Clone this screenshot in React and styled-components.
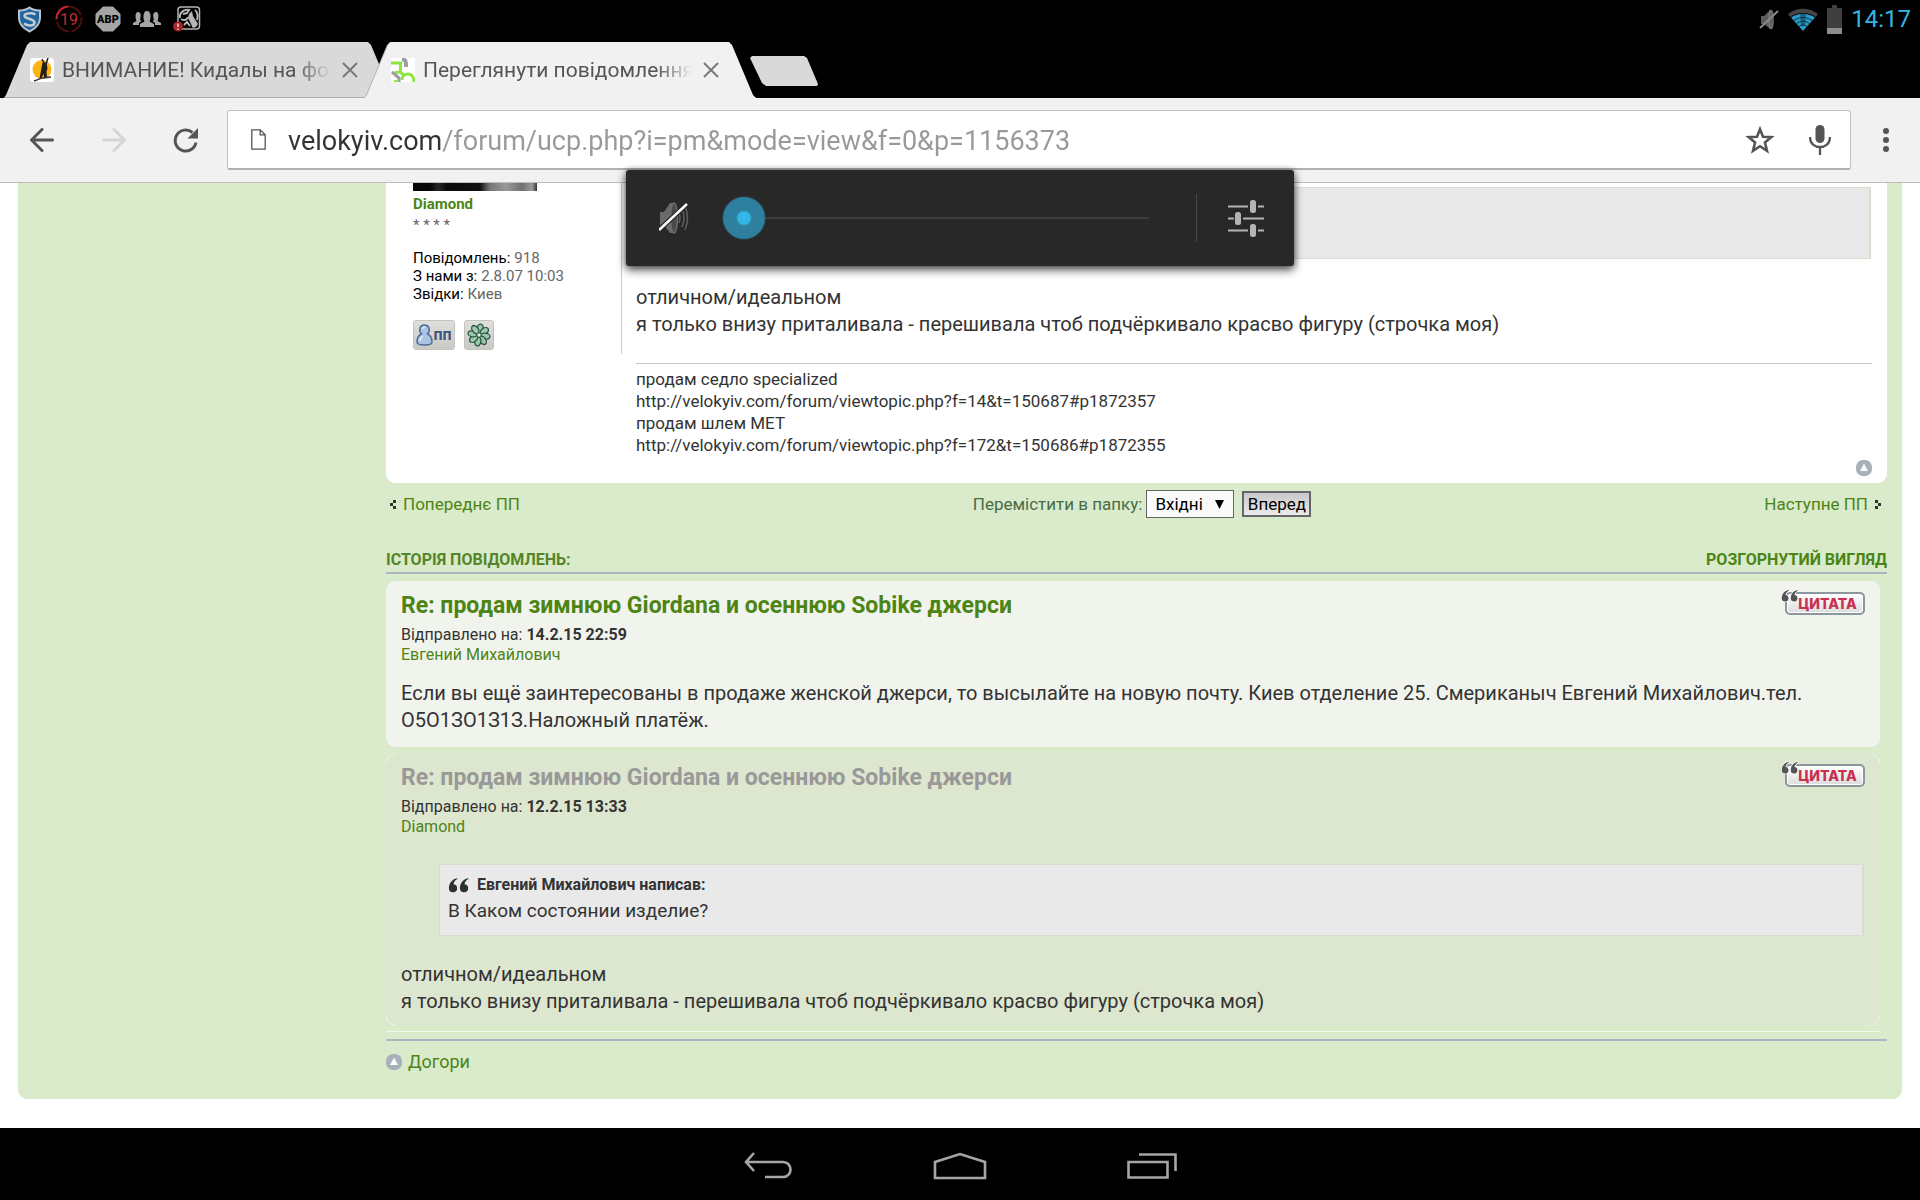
import React, { useState } from "react";
import styled, { createGlobalStyle } from "styled-components";

const GlobalStyle = createGlobalStyle`
  *, *::before, *::after { box-sizing: border-box; }
  body { margin: 0; background: #fff; font-family: Roboto, "Noto Sans", sans-serif; color: #333; }
  button, input, select { font-family: inherit; margin: 0; }
  p, h2, h3, dl, dt, dd, blockquote { margin: 0; }
  a { color: #4c8515; text-decoration: none; }
`;

const Screen = styled.div`
  position: relative;
  display: flex;
  flex-direction: column;
  min-height: 100vh;
`;

/* ---------- system status bar ---------- */

const StatusBar = styled.header`
  display: flex;
  align-items: center;
  justify-content: space-between;
  height: 38px;
  padding: 0 9px 0 16px;
  background: #000;
`;

const StatusGroup = styled.div`
  display: flex;
  align-items: center;
  gap: ${(p) => p.$gap}px;
`;

const Clock = styled.time`
  color: #33b5e5;
  font-size: 24px;
  line-height: 38px;
`;

/* ---------- browser tabs ---------- */

const TabStrip = styled.nav`
  display: flex;
  align-items: flex-end;
  height: 60px;
  padding-left: 4px;
  background: #000;
`;

const TabEdge = styled.div`
  width: 391px;
  margin-right: -30px;
  filter: ${(p) => (p.$active ? "drop-shadow(-1px 0 0 #b4b4b4)" : "none")};
`;

const TabShape = styled.div`
  display: flex;
  align-items: center;
  height: 56px;
  padding: 0 26px;
  background: ${(p) => (p.$active ? "#f1f1f1" : "#d9d9d9")};
  border-bottom: 1px solid ${(p) => (p.$active ? "#f1f1f1" : "#adadad")};
  clip-path: polygon(0 100%, 2px calc(100% - 3px), 23px 3px, 26px 0, calc(100% - 27px) 0, calc(100% - 24px) 3px, calc(100% - 3px) calc(100% - 3px), 100% 100%);
`;

const TabTitle = styled.button`
  flex: 1;
  min-width: 0;
  margin-left: 8px;
  padding: 0;
  border: 0;
  background: none;
  color: #555;
  font-size: 21px;
  line-height: 30px;
  text-align: left;
  white-space: nowrap;
  overflow: hidden;
  mask-image: linear-gradient(90deg, #000 calc(100% - 36px), transparent);
`;

const IconButton = styled.button`
  display: flex;
  align-items: center;
  justify-content: center;
  flex: none;
  width: ${(p) => p.$width}px;
  height: 100%;
  padding: 0;
  border: 0;
  background: none;
`;

const NewTab = styled.button`
  align-self: center;
  width: 68px;
  height: 30px;
  margin: 6px 0 0 24px;
  padding: 0;
  border: 0;
  background: #d9d9d9;
  clip-path: polygon(0 2px, 2px 0, 54px 0, 57px 2px, 100% 28px, 67px 100%, 16px 100%, 12px 27px);
`;

/* ---------- toolbar ---------- */

const Toolbar = styled.form`
  display: flex;
  align-items: center;
  height: 85px;
  padding-left: 6px;
  background: #f1f1f1;
  border-bottom: 1px solid #bdbdbd;
`;

const Omnibox = styled.div`
  display: flex;
  align-items: center;
  flex: 1;
  height: 60px;
  margin-left: 5px;
  padding-left: 23px;
  background: #fff;
  border: 1px solid #c0c0c0;
  border-bottom: 2px solid #b0b0b0;
  border-radius: 3px;
`;

const Address = styled.input`
  flex: 1;
  min-width: 0;
  height: 50px;
  margin-left: 22px;
  padding: 2px 0 0;
  border: 0;
  outline: 0;
  font-size: 27px;
  color: #999;
  background: linear-gradient(90deg, #333 155px, #999 155px);
  background-clip: text;
  -webkit-background-clip: text;
  -webkit-text-fill-color: transparent;
`;

/* ---------- volume panel ---------- */

const VolumePanel = styled.section`
  position: absolute;
  top: 170px;
  left: 0;
  right: 0;
  display: flex;
  align-items: center;
  width: 668px;
  height: 96px;
  margin: 0 auto;
  padding-left: 33px;
  background: #282828;
  border-radius: 3px;
  box-shadow: 0 4px 10px rgba(0, 0, 0, 0.65), 0 0 6px rgba(0, 0, 0, 0.35);
`;

const VolumeRange = styled.input`
  flex: 1;
  height: 44px;
  margin: 0 26px 0 33px;
  appearance: none;
  background: linear-gradient(#3c3c3c, #3c3c3c) 21px 50% / calc(100% - 42px) 2px no-repeat;
  &::-webkit-slider-thumb {
    appearance: none;
    width: 44px;
    height: 44px;
    border-radius: 50%;
    background: radial-gradient(circle, #33b5e5 6px, #2f7f9e 8px 20px, #28607a 21px, transparent 22px);
  }
`;

const PanelRule = styled.span`
  width: 1px;
  height: 48px;
  background: #484848;
`;

/* ---------- forum page ---------- */

const Page = styled.main`
  flex: 1;
  padding: 0 18px 29px;
  background: #fff;
`;

const Forum = styled.div`
  padding: 0 15px 26px 368px;
  background: #d9ebca;
  border-radius: 0 0 9px 9px;
`;

const Post = styled.article`
  display: flex;
  align-items: flex-start;
  padding: 0 15px 7px 27px;
  background: #fff;
  border-radius: 0 0 9px 9px;
`;

const Profile = styled.aside`
  flex: none;
  width: 209px;
  padding-bottom: 4px;
  border-right: 1px solid #ccc;
  font-size: 15px;
  line-height: 18px;
  color: #666;
`;

const Avatar = styled.div`
  width: 124px;
  height: 8px;
  margin-bottom: 4px;
  background: linear-gradient(90deg, #060606 0 14%, #262626 20%, #0a0a0a 28%, #101010 54%, #777 62%, #999 75%, #707070 88%, #999 96%, #333);
`;

const AuthorLink = styled.a`
  display: block;
  font-weight: ${(p) => (p.$bold ? 700 : 400)};
`;

const Rank = styled.div`
  line-height: 24px;
`;

const Stats = styled.dl`
  margin: 12px 0 17px;
`;

const Stat = styled.div`
  display: flex;
  gap: 4px;
  dt { color: #000; }
`;

const ContactRow = styled.div`
  display: flex;
  gap: 9px;
`;

const ContactButton = styled.button`
  display: flex;
  align-items: center;
  justify-content: center;
  width: ${(p) => p.$width}px;
  height: 30px;
  padding: 0;
  border: 1px solid #c3c3c0;
  border-radius: 3px;
  background: linear-gradient(#dededb, #c9c9c6);
  color: #3d5878;
  font-size: 16px;
  font-weight: 700;
  line-height: 18px;
`;

const PostBody = styled.div`
  flex: 1;
  display: flex;
  flex-direction: column;
  margin-left: 14px;
`;

const Text = styled.p`
  font-size: 20px;
  line-height: 27px;
`;

const QuoteBox = styled.blockquote`
  min-height: 72px;
  margin: ${(p) => p.$top}px 1px 25px 38px;
  padding: 9px 8px 10px;
  background: #e9e9e9;
  border: 1px solid #dbdbce;
  border-width: 1px 2px 1px 1px;
`;

const QuoteAuthor = styled.cite`
  display: flex;
  align-items: center;
  gap: 7px;
  font-size: 16px;
  font-style: normal;
  font-weight: 700;
  line-height: 22px;
`;

const QuoteText = styled.p`
  padding-top: 2px;
  font-size: 19px;
  line-height: 26px;
`;

const Signature = styled.div`
  margin: 25px 0 4px;
  padding-top: 4px;
  border-top: 1px solid #c6c6c6;
  font-size: 17px;
  line-height: 22px;
`;

const TopLink = styled.a`
  display: flex;
  align-items: center;
  align-self: ${(p) => p.$align || "auto"};
  gap: 6px;
  font-size: 18px;
  line-height: ${(p) => (p.$align ? 16 : 22)}px;
`;

const Pager = styled.form`
  display: flex;
  align-items: center;
  justify-content: space-between;
  padding: 7px 6px 0 4px;
  font-size: 17px;
  line-height: 28px;
`;

const PagerLink = styled.a`
  display: flex;
  align-items: center;
  gap: 7px;
`;

const MoveGroup = styled.div`
  display: flex;
  align-items: center;
  label { color: #476c47; }
`;

const SelectWrap = styled.span`
  display: grid;
  align-items: center;
  width: 88px;
  height: 28px;
  margin: 0 8px 0 4px;
  & > * { grid-area: 1 / 1; }
  svg { justify-self: end; margin-right: 10px; pointer-events: none; }
`;

const FolderSelect = styled.select`
  width: 100%;
  height: 28px;
  padding: 0 8px;
  appearance: none;
  border: 1px solid #666;
  border-radius: 0;
  background: #fafafa;
  color: #000;
  font-size: 17px;
`;

const GoButton = styled.button`
  width: 69px;
  height: 26px;
  padding: 0;
  border: 2px solid #666;
  background: linear-gradient(#c8c8c8, #ebebeb);
  color: #000;
  font-size: 17px;
  line-height: 20px;
`;

const SectionHead = styled.div`
  display: flex;
  justify-content: space-between;
  margin: 32px 0 7px;
  padding-bottom: 2px;
  border-bottom: 2px solid #a9b8bf;
  font-size: 16px;
  font-weight: 700;
  line-height: 20px;
  h2 { font: inherit; color: #568529; }
`;

const Card = styled.article`
  margin: 0 7px ${(p) => (p.$read ? 6 : 7)}px 0;
  padding: ${(p) => (p.$read ? "10px 15px" : "11px 15px 13px")};
  border-radius: 9px;
  ${(p) =>
    p.$read
      ? `background:
          radial-gradient(circle at 9px 9px, transparent 8px, #f3f7ee 8px) 0 0 / 9px 9px no-repeat,
          radial-gradient(circle at 0 9px, transparent 8px, #f3f7ee 8px) 100% 0 / 9px 9px no-repeat,
          radial-gradient(circle at 9px 0, transparent 8px, #f3f7ee 8px) 0 100% / 9px 9px no-repeat,
          radial-gradient(circle at 0 0, transparent 8px, #f3f7ee 8px) 100% 100% / 9px 9px no-repeat,
          #dde6cf;`
      : "background: #f1f4ed;"}
`;

const CardHead = styled.header`
  display: flex;
  align-items: flex-start;
  justify-content: space-between;
  margin-bottom: 5px;
`;

const CardTitle = styled.h3`
  font-size: 23px;
  line-height: 28px;
  color: ${(p) => (p.$read ? "#999" : "#4c8515")};
`;

const Meta = styled.div`
  margin-bottom: ${(p) => p.$gap}px;
  font-size: 16px;
  line-height: 20px;
`;

const CiteButton = styled.button`
  position: relative;
  width: 80px;
  height: 23px;
  padding: 0 5px 0 10px;
  border: 2px solid #8b979c;
  border-radius: 5px;
  background: linear-gradient(#fff, #dcdcdc);
  box-shadow: inset 0 0 0 1px #fff;
  color: #c9304f;
  font-family: Inter, Roboto, sans-serif;
  font-size: 14px;
  font-weight: 800;
  line-height: 18px;
  svg { position: absolute; left: -6px; top: -5px; }
`;

const EndRule = styled.div`
  height: 1px;
  margin: 0 7px 7px 0;
  background: #f3f7ee;
`;

const ForumFoot = styled.footer`
  padding-top: 10px;
  border-top: 2px solid #a9b8bf;
`;

/* ---------- system navigation bar ---------- */

const NavBar = styled.nav`
  display: flex;
  justify-content: center;
  height: 72px;
  padding-top: 3px;
  background: #000;
`;

/* ---------- drawings ---------- */

const Shield = () => (
  <svg width="27" height="28" viewBox="0 0 27 28">
    <path d="M13.500 2.500C10 5 6 5.500 3 5.500V13c0 7 4.500 10.500 10.500 13.500C19.500 23.500 24 20 24 13V5.500c-4 0-7.500-.5-10.500-3z" fill="#20659f" stroke="#b9c3ca" strokeWidth="2" />
    <path d="M19.500 9.500c-3-1.500-11-2-11 1.500 0 3 10 2.500 10 6.500 0 3.500-6 4-10.500 1" fill="none" stroke="#c6ced3" strokeWidth="2.500" />
  </svg>
);

const Ring = () => (
  <svg width="28" height="28" viewBox="0 0 28 28">
    <circle cx="14" cy="14" r="12.500" fill="none" stroke="#4a0f10" strokeWidth="2" strokeDasharray="17 2" />
    <path d="M1.500 14A12.500 12.500 0 0 1 13 1.500" fill="none" stroke="#c02528" strokeWidth="2" />
    <text x="14" y="19.500" textAnchor="middle" fontFamily="Roboto" fontSize="16" fill="#c42a2c">19</text>
  </svg>
);

const AdBlock = () => (
  <svg width="26" height="26" viewBox="0 0 26 26">
    <path d="M8 .5h10L25.500 8v10L18 25.500H8L.5 18V8z" fill="#a5a5a5" />
    <text x="13" y="17" textAnchor="middle" fontFamily="Roboto" fontWeight="900" fontSize="11" fill="#000">ABP</text>
  </svg>
);

const People = () => (
  <svg width="28" height="18" viewBox="0 0 28 18" fill="#a5a5a5">
    <path d="M0 15v-2l3.500-2c-1-2-2-9 1.500-9s3 4 2 8l1.500 1-2.500 2v2zM28 15v-2l-3.500-2c1-2 2-9-1.500-9s-3 4-2 8l-1.500 1 2.500 2v2z" />
    <path d="M7 17v-3l4.500-2.500C10 9 9.500 1 14 1s4 8 2.500 10.500L21 14v3z" />
  </svg>
);

const AppAlert = () => (
  <svg width="28" height="26" viewBox="0 0 28 26">
    <rect x="5" y="1" width="21.500" height="22" rx="3" fill="#000" stroke="#b5b5b5" strokeWidth="1.500" />
    <path d="M16 8l3-3 1 5 5 8-2 3-4-1-4-8z" fill="#b5b5b5" />
    <path d="M7 12c-1-6 5-9 9-8l-2 3-4 1M8 13c3 2 6 1 7-2M22 4c3 2 3 7 2 10M11 19l3-3 3 4M19 20l3 1" fill="none" stroke="#b5b5b5" strokeWidth="2" />
    <circle cx="5" cy="20.500" r="5" fill="#a82629" />
    <path d="M5 17.500V21M5 22.500V24" stroke="#e5b5b5" strokeWidth="1.800" />
  </svg>
);

const SmallMute = () => (
  <svg width="20" height="22" viewBox="0 0 20 22">
    <path d="M2 8h3l6-6h2v19h-2l-6-5H2z" fill="#5c5c5c" />
    <ellipse cx="12" cy="11.500" rx="2" ry="9" fill="none" stroke="#777" strokeWidth="1.500" />
    <path d="M1 20L19 3" stroke="#8a8a8a" strokeWidth="2" />
  </svg>
);

const Wifi = () => (
  <svg width="30" height="23" viewBox="0 0 30 23">
    <path d="M0 6C9-1 21-1 30 6l-2 3C20 3.500 10 3.500 2 9z" fill="#444" />
    <path d="M3 9.500c8-5 16-5 24 0L15 23z" fill="#2b9bc9" />
    <path d="M6 12.500c6-4 12-4 18 0M8.500 15.500c4-3 9-3 13 0M11 18.500c3-2 5-2 8 0" fill="none" stroke="#0b2e3c" strokeWidth="1" />
    <path d="M12 6h6l-1 12h-4z" fill="#0c3442" opacity=".55" />
  </svg>
);

const Battery = () => (
  <svg width="15" height="29" viewBox="0 0 15 29">
    <path d="M5 0h5v3h5v26H0V3h5z" fill="#3f3f3f" />
    <path d="M0 23h15v6H0z" fill="#8c8c8c" />
  </svg>
);

const SunFavicon = () => (
  <svg width="24" height="24" viewBox="0 0 24 24">
    <rect width="24" height="24" rx="3" fill="#fff" />
    <circle cx="12" cy="11.500" r="9.500" fill="#fbb416" />
    <path d="M12 1l2 4M18 0l-2 6" stroke="#222" strokeWidth="1.500" />
    <path d="M12.500 4.500h4l1 6-1 3 .5 6h-3l-.5-4-2 5h-2l1.500-8z" fill="#262014" />
    <path d="M4 23c4-1 6-3 9-3l8-1" fill="none" stroke="#333" strokeWidth="1.500" />
  </svg>
);

const BikeFavicon = () => (
  <svg width="24" height="24" viewBox="0 0 24 24">
    <rect width="24" height="24" fill="#fff" />
    <path d="M11 1.500h2q2 1 2 4V9" fill="none" stroke="#9e9e9e" strokeWidth="4" />
    <path d="M0 5h9.500v9l-5.500.5M9 14l5 4" fill="none" stroke="#8ee53f" strokeWidth="3" />
    <path d="M11 22c0-4 3-6 6-6 4 0 6 4 6 8" fill="none" stroke="#8ee53f" strokeWidth="3" />
    <path d="M1 14l7 6v4" fill="none" stroke="#9e9e9e" strokeWidth="3" />
    <path d="M3 22h3v2H3z" fill="#8ee53f" />
  </svg>
);

const Cross = () => (
  <svg width="16" height="16" viewBox="0 0 16 16">
    <path d="M1 1l14 14M15 1L1 15" stroke="#7a7a7a" strokeWidth="2" />
  </svg>
);

const Arrow = ({ flip }) => (
  <svg width="24" height="24" viewBox="0 0 24 24" fill="none" stroke={flip ? "#d6d6d6" : "#555"} strokeWidth="3" strokeLinecap="round">
    <path d={flip ? "M1.500 12h20M12 1.500L22.500 12 12 22.500" : "M22.500 12h-20M12 1.500L1.500 12 12 22.500"} />
  </svg>
);

const Reload = () => (
  <svg width="26" height="26" viewBox="0 0 26 26">
    <path d="M19.500 5.500A10.500 10.500 0 1 0 23 15.500" fill="none" stroke="#555" strokeWidth="3" />
    <path d="M25 1v10.500H14.500z" fill="#555" />
  </svg>
);

const PageIcon = () => (
  <svg width="15" height="21" viewBox="0 0 15 21">
    <path d="M.8.8h8.400l5 5v14.400H.8zM9.200.8v5h5" fill="none" stroke="#555" strokeWidth="1.300" />
  </svg>
);

const Star = () => (
  <svg width="30" height="28" viewBox="0 0 30 28">
    <path d="M15 3.200l3 7.500 8.300.5-6.400 5.200 2.100 8.400-7-4.600-7 4.600 2.100-8.400-6.400-5.200 8.300-.5z" fill="none" stroke="#555" strokeWidth="2.600" />
  </svg>
);

const Mic = () => (
  <svg width="22" height="30" viewBox="0 0 22 30">
    <rect x="6.500" y="0" width="9" height="18" rx="4.500" fill="#555" />
    <path d="M1.200 12v1.500a9.800 8.500 0 0 0 19.600 0V12M11 22v8" fill="none" stroke="#555" strokeWidth="2.300" />
  </svg>
);

const Dots = () => (
  <svg width="6" height="24" viewBox="0 0 6 24" fill="#555">
    <circle cx="3" cy="3" r="3" /><circle cx="3" cy="12" r="3" /><circle cx="3" cy="21" r="3" />
  </svg>
);

const PanelMute = () => (
  <svg width="30" height="34" viewBox="0 0 30 34">
    <path d="M1 11h4l6-9h4v30h-4l-6-8H1z" fill="#6b6b6b" />
    <ellipse cx="15" cy="17" rx="3.500" ry="15" fill="#4a4a4a" stroke="#6b6b6b" strokeWidth="1.500" />
    <path d="M20 12q2 5 0 10M23 8q4 9 0 18M26 5q5 12 0 24" fill="none" stroke="#606060" strokeWidth="1.500" />
    <path d="M0 29L28 3" stroke="#282828" strokeWidth="5" />
    <path d="M0 29L28 3" stroke="#fff" strokeWidth="2.500" />
  </svg>
);

const Sliders = () => (
  <svg width="36" height="38" viewBox="0 -1 36 38">
    <path d="M0 6.500h20M30 6.500h6M0 18.500h6M15 18.500h21M0 30.500h20M30 30.500h6" stroke="#b4b4b4" strokeWidth="2" />
    <rect x="22" y="0" width="6" height="13" rx="2.500" fill="#b4b4b4" />
    <rect x="7" y="12" width="6" height="13" rx="2.500" fill="#b4b4b4" />
    <rect x="22" y="24" width="6" height="13" rx="2.500" fill="#b4b4b4" />
  </svg>
);

const Person = () => (
  <svg width="17" height="22" viewBox="0 0 17 22">
    <path d="M1 18c0-4 2-7 4.500-8C2 6 4 1 8.500 1s6.500 5 3 9c2.500 1 4.500 4 4.500 8 0 4-15 4-15 0z" fill="#aac4e6" stroke="#4d6f96" strokeWidth="1.500" />
    <path d="M6 5q1-2 3-2M4 17q0-3 3-5" fill="none" stroke="#e6f0fb" strokeWidth="1.500" />
  </svg>
);

const Flower = () => (
  <svg width="24" height="24" viewBox="-12 -12 24 24">
    {[10, 55, 100, 145, 190, 235, 280, 325].map((a) => (
      <ellipse key={a} cx="0" cy="-6.500" rx="3" ry="4.600" transform={`rotate(${a})`} fill="#9cc9ae" stroke="#2c5444" strokeWidth="1.300" />
    ))}
    <circle r="2.200" fill="#d8efe0" stroke="#2c5444" />
  </svg>
);

const UpBadge = () => (
  <svg width="16" height="16" viewBox="0 0 16 16">
    <rect width="16" height="16" rx="7" fill="#a7b1b8" />
    <path d="M8 3.500l4 7.500H4z" fill="#fff" />
  </svg>
);

const PixelArrow = ({ flip }) => (
  <svg width="6" height="9" viewBox="0 0 6 9" fill="#333">
    <path d={flip ? "M0 0h3v3H0zM3 3h3v3H3zM0 6h3v3H0z" : "M3 0h3v3H3zM0 3h3v3H0zM3 6h3v3H3z"} />
  </svg>
);

const QuoteMarks = ({ width, height, outline }) => (
  <svg width={width} height={height} viewBox="-1 -1 24 18" fill={outline ? "#555" : "#2f2f2f"} stroke={outline ? "#fff" : "none"} strokeWidth="2" paintOrder="stroke">
    <path d="M9 0C3 1 0 6 0 11a4.500 4.500 0 1 0 5-4.500C5.500 4 7 2 9.500 1z" />
    <path d="M21 0c-6 1-9 6-9 11a4.500 4.500 0 1 0 5-4.500c.5-2.500 2-4.500 4.500-5.500z" />
  </svg>
);

const Triangle = () => (
  <svg width="9" height="9" viewBox="0 0 9 9"><path d="M0 0h9L4.500 9z" fill="#000" /></svg>
);

const NavIcon = ({ d, width }) => (
  <svg width={width} height="28" viewBox={`0 0 ${width} 28`}>
    <path d={d} fill="none" stroke="#a6a6a6" strokeWidth="2.600" />
  </svg>
);

/* ---------- page parts ---------- */

function Tab({ active, icon, title }) {
  return (
    <TabEdge $active={active}>
      <TabShape $active={active}>
        {icon}
        <TabTitle type="button">{title}</TabTitle>
        <IconButton type="button" $width={38} aria-label="Close tab"><Cross /></IconButton>
      </TabShape>
    </TabEdge>
  );
}

function HistoryCard({ read, date, author, children }) {
  return (
    <Card $read={read}>
      <CardHead>
        <CardTitle $read={read}>Re: продам зимнюю Giordana и осеннюю Sobike джерси</CardTitle>
        <CiteButton type="button"><QuoteMarks width={18} height={14} outline />ЦИТАТА</CiteButton>
      </CardHead>
      <Meta $gap={read ? 27 : 15}>
        <div>Відправлено на: <strong>{date}</strong></div>
        <AuthorLink href="#author">{author}</AuthorLink>
      </Meta>
      {children}
    </Card>
  );
}

export default function App() {
  const [volume, setVolume] = useState(0);
  const [url, setUrl] = useState("velokyiv.com/forum/ucp.php?i=pm&mode=view&f=0&p=1156373");
  return (
    <Screen>
      <GlobalStyle />
      <StatusBar>
        <StatusGroup $gap={12}><Shield /><Ring /><AdBlock /><People /><AppAlert /></StatusGroup>
        <StatusGroup $gap={9}><SmallMute /><Wifi /><Battery /><Clock>14:17</Clock></StatusGroup>
      </StatusBar>
      <TabStrip>
        <Tab icon={<SunFavicon />} title="ВНИМАНИЕ! Кидалы на фо" />
        <Tab active icon={<BikeFavicon />} title="Переглянути повідомлення" />
        <NewTab type="button" aria-label="New tab" />
      </TabStrip>
      <Toolbar onSubmit={(e) => e.preventDefault()}>
        <IconButton type="button" $width={72} aria-label="Back"><Arrow /></IconButton>
        <IconButton type="button" $width={72} aria-label="Forward"><Arrow flip /></IconButton>
        <IconButton type="button" $width={72} aria-label="Reload"><Reload /></IconButton>
        <Omnibox>
          <PageIcon />
          <Address aria-label="Address" value={url} onChange={(e) => setUrl(e.target.value)} />
          <IconButton type="button" $width={60} aria-label="Bookmark"><Star /></IconButton>
          <IconButton type="button" $width={60} aria-label="Voice search"><Mic /></IconButton>
        </Omnibox>
        <IconButton type="button" $width={69} aria-label="Menu"><Dots /></IconButton>
      </Toolbar>

      <Page>
        <Forum>
          <Post>
            <Profile>
              <Avatar />
              <AuthorLink $bold href="#diamond">Diamond</AuthorLink>
              <Rank>* * * *</Rank>
              <Stats>
                <Stat><dt>Повідомлень:</dt><dd>918</dd></Stat>
                <Stat><dt>З нами з:</dt><dd>2.8.07 10:03</dd></Stat>
                <Stat><dt>Звідки:</dt><dd>Киев</dd></Stat>
              </Stats>
              <ContactRow>
                <ContactButton type="button" $width={42}><Person />пп</ContactButton>
                <ContactButton type="button" $width={30} aria-label="ICQ"><Flower /></ContactButton>
              </ContactRow>
            </Profile>
            <PostBody>
              <QuoteBox $top={4} />
              <Text>отличном/идеальном<br />я только внизу приталивала - перешивала чтоб подчёркивало красво фигуру (строчка моя)</Text>
              <Signature>
                продам седло specialized<br />
                http://velokyiv.com/forum/viewtopic.php?f=14&amp;t=150687#p1872357<br />
                продам шлем MET<br />
                http://velokyiv.com/forum/viewtopic.php?f=172&amp;t=150686#p1872355
              </Signature>
              <TopLink $align="flex-end" href="#top" aria-label="Догори"><UpBadge /></TopLink>
            </PostBody>
          </Post>

          <Pager onSubmit={(e) => e.preventDefault()}>
            <PagerLink href="#prev"><PixelArrow />Попереднє ПП</PagerLink>
            <MoveGroup>
              <label htmlFor="folder">Перемістити в папку:</label>
              <SelectWrap>
                <FolderSelect id="folder"><option>Вхідні</option></FolderSelect>
                <Triangle />
              </SelectWrap>
              <GoButton type="submit">Вперед</GoButton>
            </MoveGroup>
            <PagerLink href="#next">Наступне ПП<PixelArrow flip /></PagerLink>
          </Pager>

          <SectionHead>
            <h2>ІСТОРІЯ ПОВІДОМЛЕНЬ:</h2>
            <a href="#expand">РОЗГОРНУТИЙ ВИГЛЯД</a>
          </SectionHead>

          <HistoryCard date="14.2.15 22:59" author="Евгений Михайлович">
            <Text>Если вы ещё заинтересованы в продаже женской джерси, то высылайте на новую почту. Киев отделение 25. Смериканыч Евгений Михайлович.тел. О5О1ЗО1З1З.Наложный платёж.</Text>
          </HistoryCard>
          <HistoryCard read date="12.2.15 13:33" author="Diamond">
            <QuoteBox $top={0}>
              <QuoteAuthor><QuoteMarks width={22} height={17} />Евгений Михайлович написав:</QuoteAuthor>
              <QuoteText>В Каком состоянии изделие?</QuoteText>
            </QuoteBox>
            <Text>отличном/идеальном<br />я только внизу приталивала - перешивала чтоб подчёркивало красво фигуру (строчка моя)</Text>
          </HistoryCard>
          <EndRule />
          <ForumFoot>
            <TopLink href="#top"><UpBadge />Догори</TopLink>
          </ForumFoot>
        </Forum>
      </Page>

      <NavBar>
        <IconButton $width={192} aria-label="Back"><NavIcon width={48} d="M10 1L2 10l8 9M2 10h37c10 0 10 15 0 15H21" /></IconButton>
        <IconButton $width={192} aria-label="Home"><NavIcon width={54} d="M2 26V10L27 2l25 8v16z" /></IconButton>
        <IconButton $width={192} aria-label="Recent apps"><NavIcon width={50} d="M1.500 10h39v15.500h-39zM12 2.500h36.500V19" /></IconButton>
      </NavBar>

      <VolumePanel aria-label="Volume">
        <PanelMute />
        <VolumeRange type="range" aria-label="Volume level" min="0" max="15" value={volume} onChange={(e) => setVolume(Number(e.target.value))} />
        <PanelRule />
        <IconButton $width={97} aria-label="Sound settings"><Sliders /></IconButton>
      </VolumePanel>
    </Screen>
  );
}
